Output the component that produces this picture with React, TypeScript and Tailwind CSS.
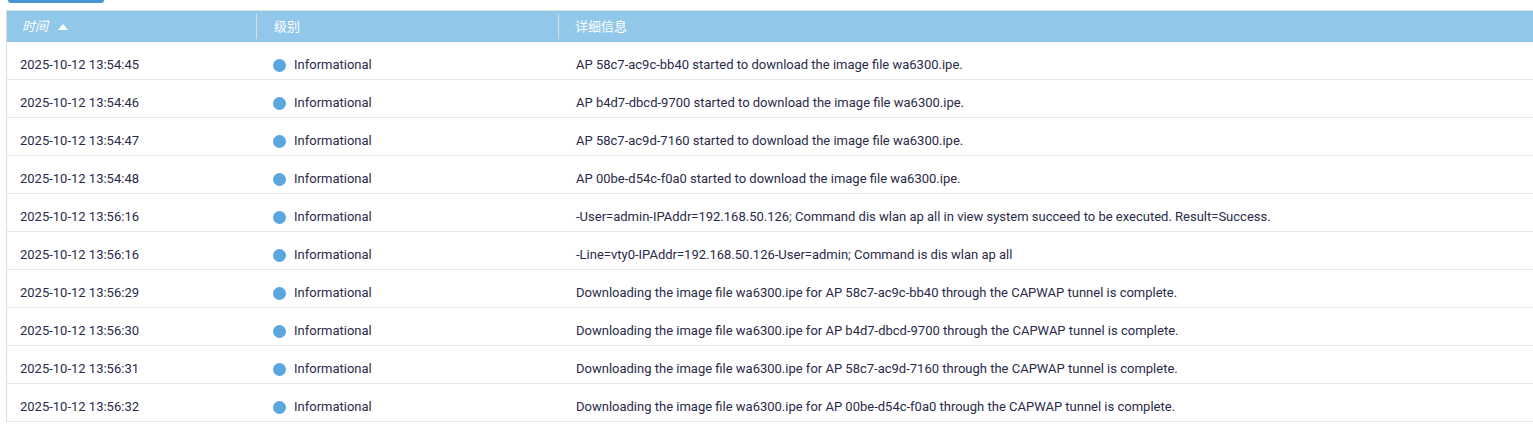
const rows = [
  ["2025-10-12 13:54:45", "AP 58c7-ac9c-bb40 started to download the image file wa6300.ipe."],
  ["2025-10-12 13:54:46", "AP b4d7-dbcd-9700 started to download the image file wa6300.ipe."],
  ["2025-10-12 13:54:47", "AP 58c7-ac9d-7160 started to download the image file wa6300.ipe."],
  ["2025-10-12 13:54:48", "AP 00be-d54c-f0a0 started to download the image file wa6300.ipe."],
  ["2025-10-12 13:56:16", "-User=admin-IPAddr=192.168.50.126; Command dis wlan ap all in view system succeed to be executed. Result=Success."],
  ["2025-10-12 13:56:16", "-Line=vty0-IPAddr=192.168.50.126-User=admin; Command is dis wlan ap all"],
  ["2025-10-12 13:56:29", "Downloading the image file wa6300.ipe for AP 58c7-ac9c-bb40 through the CAPWAP tunnel is complete."],
  ["2025-10-12 13:56:30", "Downloading the image file wa6300.ipe for AP b4d7-dbcd-9700 through the CAPWAP tunnel is complete."],
  ["2025-10-12 13:56:31", "Downloading the image file wa6300.ipe for AP 58c7-ac9d-7160 through the CAPWAP tunnel is complete."],
  ["2025-10-12 13:56:32", "Downloading the image file wa6300.ipe for AP 00be-d54c-f0a0 through the CAPWAP tunnel is complete."],
];

export default function App() {
  return (
    <div className="w-[1533px] h-[430px] bg-white overflow-hidden font-['Roboto','Noto_Sans_CJK_SC',sans-serif] text-[13px] text-[#2a2a48]">
      <div className="ml-2 w-[96px] h-[4px] bg-[#4a96d5] rounded-b-[3px] -mt-px" />
      <div className="ml-[6px] mt-[7px] border-l border-t border-[#dcdcdc]">
        <div className="flex h-[31px] bg-[#91c7e9] text-white">
          <div className="w-[250px] flex items-center pl-[15px] border-r border-[#d6dde3] my-[3px]">
            <span className="italic">时间</span>
            <svg width="10" height="6" viewBox="0 0 10 6" className="ml-[10px]">
              <path d="M0 6 L5 0 L10 6 Z" fill="#fff" />
            </svg>
          </div>
          <div className="w-[302px] flex items-center pl-[17px] border-r border-[#d6dde3] my-[3px]">
            级别
          </div>
          <div className="flex-1 flex items-center pl-[16px]">详细信息</div>
        </div>
        {rows.map(([t, msg], i) => (
          <div key={i} className="flex h-[38px] items-center pt-[9px] border-b border-[#e6e6e6]">
            <div className="w-[250px] pl-[13px]">{t}</div>
            <div className="w-[302px] pl-[16px] flex items-center">
              <span className="w-[13px] h-[13px] rounded-full bg-[#5aa6df] mr-[8px]" />
              Informational
            </div>
            <div className="flex-1 pl-[17px]">{msg}</div>
          </div>
        ))}
      </div>
    </div>
  );
}
